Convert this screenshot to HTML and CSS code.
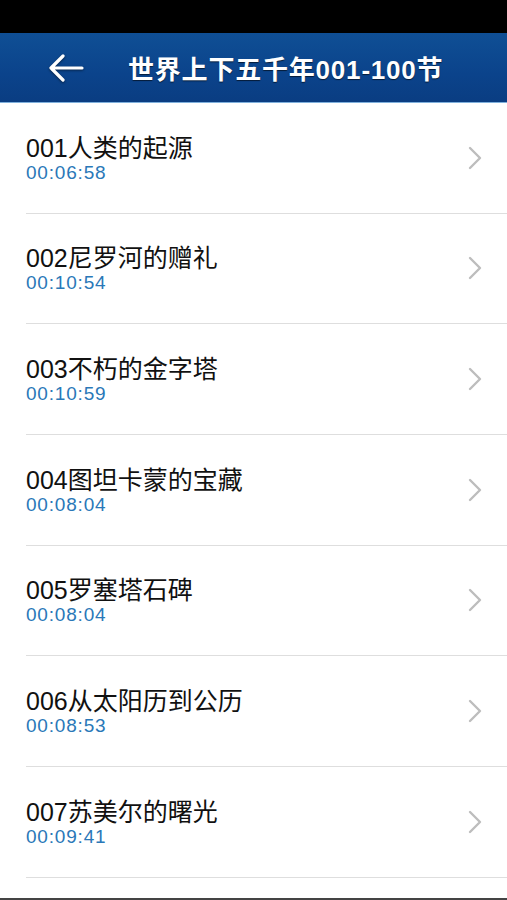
FILE: index.html
```html
<!DOCTYPE html>
<html lang="zh-CN">
<head>
    <meta charset="UTF-8">
    <meta name="viewport" content="width=device-width, initial-scale=1.0">
    <title>世界上下五千年001-100节</title>
    <link rel="stylesheet" href="styles.css">
</head>
<body>
    <div class="status-bar"></div>
    <header class="nav-bar">
        <svg class="back-icon" width="36" height="28" viewBox="0 0 36 28">
            <path d="M2 14 H33 M14 2 L2 14 L14 26" fill="none" stroke="#fff" stroke-width="3.2" stroke-linecap="round" stroke-linejoin="round"/>
        </svg>
        <h1>世界上下五千年001-100节</h1>
    </header>
    <main class="chapter-list">
        <div class="chapter">
            <div class="chapter-info">
                <p class="chapter-title">001人类的起源</p>
                <p class="chapter-time">00:06:58</p>
            </div>
            <svg class="chevron" width="14" height="24" viewBox="0 0 14 24"><path d="M2 2 L12 12 L2 22" /></svg>
        </div>
        <div class="chapter">
            <div class="chapter-info">
                <p class="chapter-title">002尼罗河的赠礼</p>
                <p class="chapter-time">00:10:54</p>
            </div>
            <svg class="chevron" width="14" height="24" viewBox="0 0 14 24"><path d="M2 2 L12 12 L2 22" /></svg>
        </div>
        <div class="chapter">
            <div class="chapter-info">
                <p class="chapter-title">003不朽的金字塔</p>
                <p class="chapter-time">00:10:59</p>
            </div>
            <svg class="chevron" width="14" height="24" viewBox="0 0 14 24"><path d="M2 2 L12 12 L2 22" /></svg>
        </div>
        <div class="chapter">
            <div class="chapter-info">
                <p class="chapter-title">004图坦卡蒙的宝藏</p>
                <p class="chapter-time">00:08:04</p>
            </div>
            <svg class="chevron" width="14" height="24" viewBox="0 0 14 24"><path d="M2 2 L12 12 L2 22" /></svg>
        </div>
        <div class="chapter">
            <div class="chapter-info">
                <p class="chapter-title">005罗塞塔石碑</p>
                <p class="chapter-time">00:08:04</p>
            </div>
            <svg class="chevron" width="14" height="24" viewBox="0 0 14 24"><path d="M2 2 L12 12 L2 22" /></svg>
        </div>
        <div class="chapter">
            <div class="chapter-info">
                <p class="chapter-title">006从太阳历到公历</p>
                <p class="chapter-time">00:08:53</p>
            </div>
            <svg class="chevron" width="14" height="24" viewBox="0 0 14 24"><path d="M2 2 L12 12 L2 22" /></svg>
        </div>
        <div class="chapter">
            <div class="chapter-info">
                <p class="chapter-title">007苏美尔的曙光</p>
                <p class="chapter-time">00:09:41</p>
            </div>
            <svg class="chevron" width="14" height="24" viewBox="0 0 14 24"><path d="M2 2 L12 12 L2 22" /></svg>
        </div>
    </main>
    <div class="bottom-edge"></div>
</body>
</html>
```

FILE: styles.css
```css
body {
    font-family: "Liberation Sans", "Noto Sans CJK SC", sans-serif;
    margin: 0;
    padding: 0;
    background-color: #fff;
    min-height: 100vh;
    display: flex;
    flex-direction: column;
}

.status-bar {
    height: 33px;
    background-color: #000;
}

.nav-bar {
    height: 69px;
    display: flex;
    align-items: center;
    padding-left: 49px;
    gap: 43px;
    background: linear-gradient(to bottom, #0f4f95, #0b438b 60%, #0a3d82);
    border-bottom: 1px solid #7fb0dc;
}

.back-icon {
    filter: drop-shadow(0 1px 1px rgba(0, 0, 0, 0.5));
}

.nav-bar h1 {
    margin: 0;
    font-size: 26px;
    font-weight: bold;
    letter-spacing: 0.8px;
    color: #fff;
    text-shadow: 0 1px 1px rgba(0, 0, 0, 0.6);
}

.chapter-list {
    flex: 1;
}

.chapter {
    height: 109.67px;
    margin-left: 26px;
    padding-right: 25px;
    display: flex;
    align-items: center;
    justify-content: space-between;
    border-bottom: 1px solid #dedede;
    box-sizing: content-box;
}

.chapter-info {
    margin-top: 2px;
}

.chapter-info p {
    margin: 0;
}

.chapter-title {
    font-size: 25px;
    line-height: 28px;
    color: #111;
}

.chapter-time {
    margin-top: 2px;
    font-size: 19px;
    line-height: 22px;
    letter-spacing: 0.8px;
    color: #2a78b8;
}

.chevron path {
    fill: none;
    stroke: #bdbdbd;
    stroke-width: 2.4;
    stroke-linecap: round;
    stroke-linejoin: round;
}

.bottom-edge {
    height: 2px;
    background-color: #444;
}
```
